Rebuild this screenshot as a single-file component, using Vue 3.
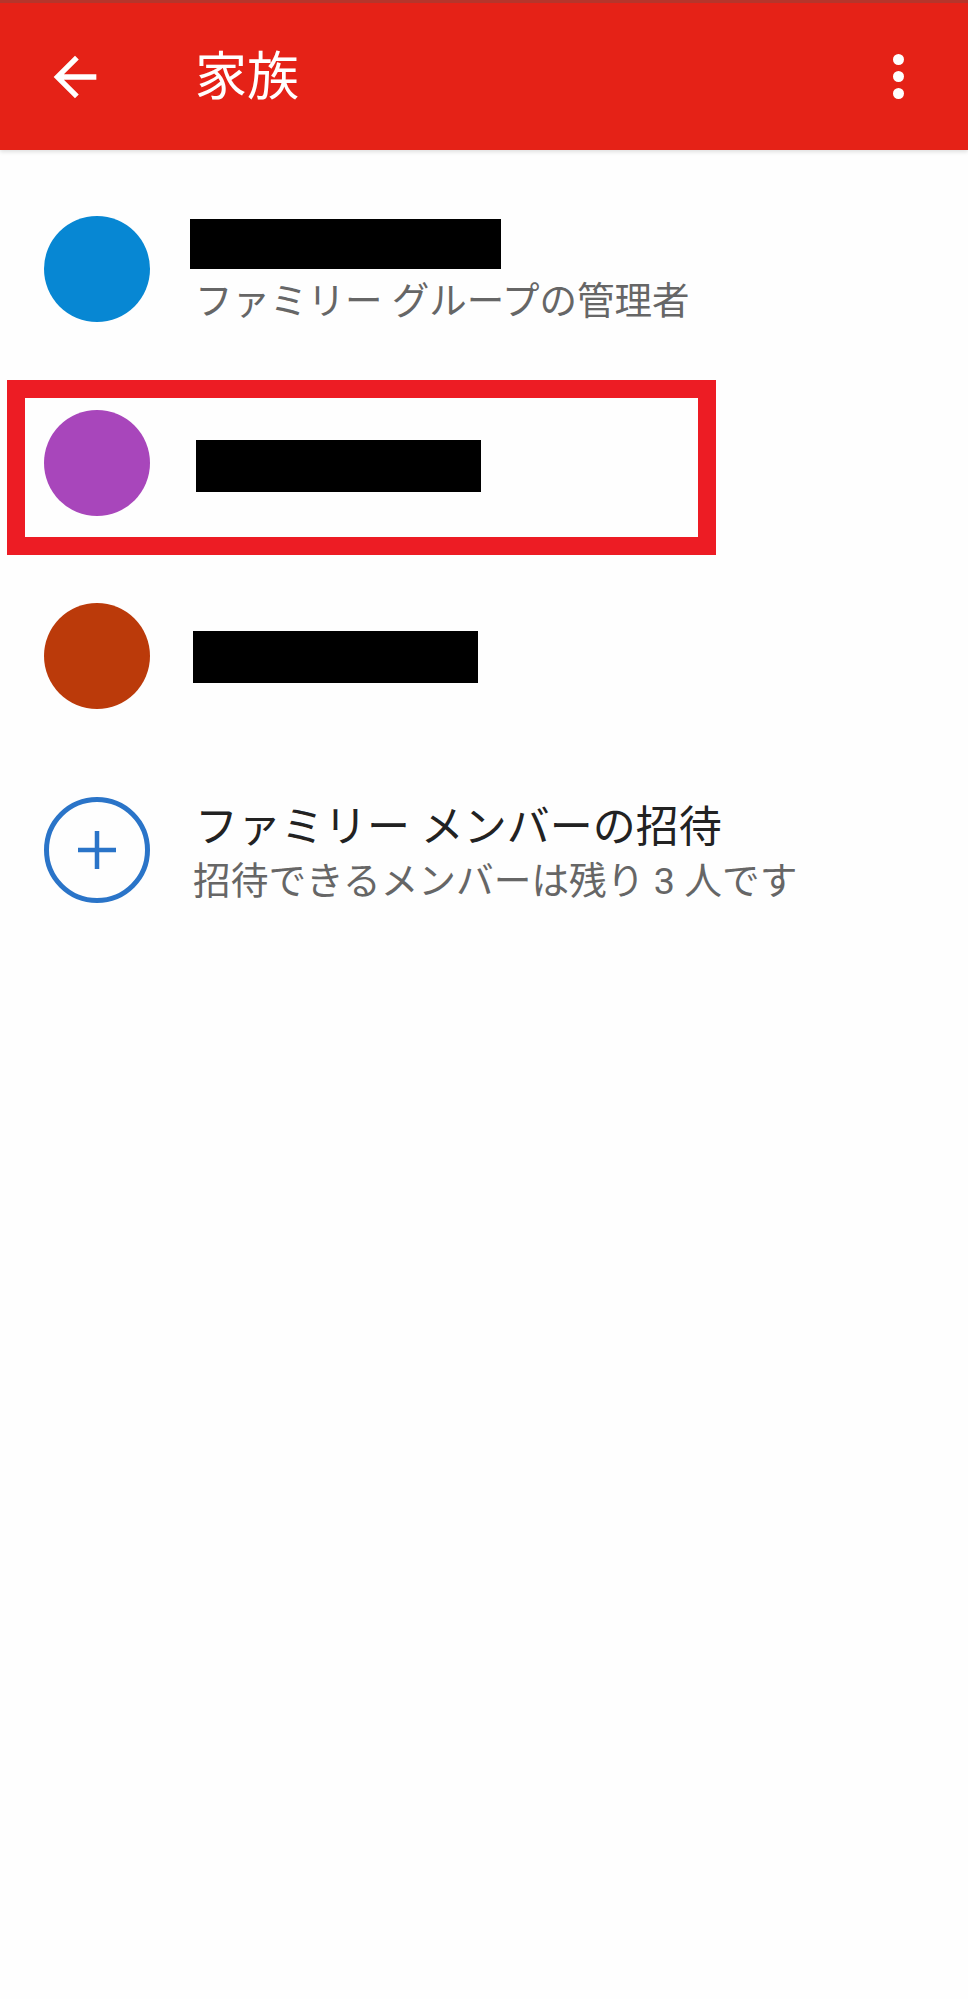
<template>
  <div class="page">
    <header class="app-bar">
      <button class="icon-btn back">
        <svg width="64" height="64" viewBox="0 0 24 24" fill="#fff">
          <path d="M20 11H7.83l5.59-5.59L12 4l-8 8 8 8 1.41-1.41L7.83 13H20v-2z" />
        </svg>
      </button>
      <h1 class="title">家族</h1>
      <div class="menu">
        <span class="dot"></span>
        <span class="dot"></span>
        <span class="dot"></span>
      </div>
    </header>

    <ul class="list">
      <li v-for="m in members" :key="m.id" class="row">
        <div class="avatar" :style="{ backgroundColor: m.color }"></div>
        <div class="info">
          <div
            class="redacted"
            :style="{ width: m.width + 'px', height: m.height + 'px', marginLeft: m.offset + 'px', marginTop: m.top + 'px' }"
          ></div>
          <p v-if="m.role" class="sub role">{{ m.role }}</p>
        </div>
        <div v-if="m.marked" class="marker"></div>
      </li>

      <li class="row">
        <div class="avatar add">
          <svg width="40" height="40" viewBox="0 0 40 40">
            <path d="M20 1v38M1 20h38" stroke="#2a74c8" stroke-width="4.5" fill="none" />
          </svg>
        </div>
        <div class="info invite">
          <p class="name">ファミリー メンバーの招待</p>
          <p class="sub">招待できるメンバーは残り 3 人です</p>
        </div>
      </li>
    </ul>
  </div>
</template>

<script setup>
const members = [
  { id: 1, color: '#0787d3', width: 311, height: 50, offset: -5, top: 7, role: 'ファミリー グループの管理者' },
  { id: 2, color: '#a846bb', width: 285, height: 52, offset: 1, top: 6, marked: true },
  { id: 3, color: '#bb3a0a', width: 285, height: 52, offset: -2, top: 2 }
]
</script>

<style>
html,
body {
  margin: 0;
  background: #fff;
}
</style>

<style scoped>
.page {
  min-height: 1999px;
  background: #fefefe;
  font-family: Roboto, "Noto Sans CJK JP", sans-serif;
}

.app-bar {
  height: 147px;
  display: flex;
  align-items: center;
  background: #e52217;
  border-top: 3px solid #b5352b;
  box-shadow: 0 2px 4px rgba(0, 0, 0, 0.12);
}

.icon-btn {
  width: 64px;
  height: 64px;
  margin-left: 43px;
  padding: 0;
  border: 0;
  background: none;
  display: flex;
}

.title {
  flex: 1;
  margin: -8px 0 0 88px;
  font-size: 52px;
  font-weight: 400;
  color: #fff;
}

.menu {
  display: flex;
  flex-direction: column;
  gap: 6px;
  margin-right: 64px;
}

.dot {
  width: 11px;
  height: 11px;
  border-radius: 50%;
  background: #fff;
}

.list {
  list-style: none;
  margin: 0;
  padding: 22px 0 0;
}

.row {
  position: relative;
  height: 193.7px;
  display: flex;
  align-items: center;
}

.avatar {
  flex-shrink: 0;
  width: 106px;
  height: 106px;
  margin-left: 44px;
  border-radius: 50%;
}

.add {
  box-sizing: border-box;
  border: 5px solid #2a74c8;
  display: flex;
  align-items: center;
  justify-content: center;
}

.info {
  margin-left: 45px;
}

.redacted {
  background: #000;
}

.name {
  margin: 0;
  font-size: 43px;
  line-height: 52px;
  color: #222;
}

.sub {
  margin: 0;
  font-size: 37.7px;
  line-height: 50px;
  color: #666;
}

.role {
  margin-top: 7px;
  font-size: 37.5px;
}

.invite {
  padding-top: 7px;
}

.invite .sub {
  margin: 3px 0 0 -2px;
}

/* annotation drawn over the second row */
.marker {
  position: absolute;
  left: 7px;
  top: 14px;
  width: 709px;
  height: 175px;
  box-sizing: border-box;
  border: 18px solid #ed1c24;
}
</style>
